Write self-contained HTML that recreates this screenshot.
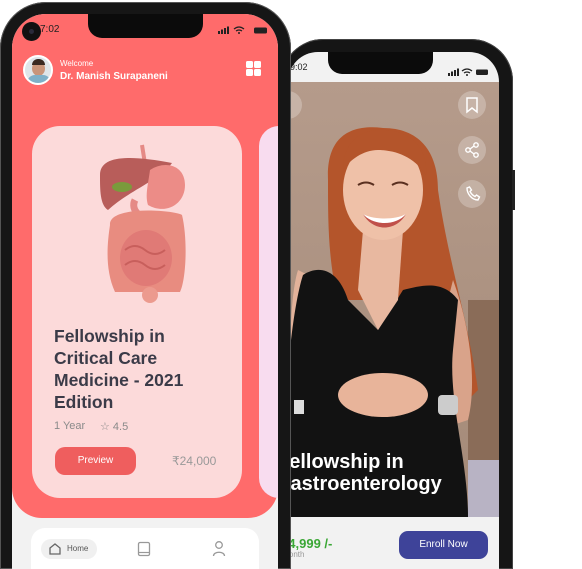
<!DOCTYPE html>
<html style="width:582px;height:569px;overflow:hidden"><head><meta charset="utf-8"><style>
*{margin:0;padding:0;box-sizing:border-box}
body{width:582px;height:569px;overflow:hidden;background:#fff;position:relative;font-family:"Liberation Sans",sans-serif}
.a{position:absolute}
</style></head><body>

<!-- back phone -->
<div class="a" style="left:281px;top:39px;width:232px;height:530px;border-radius:42px 42px 0 0;background:#151515;box-shadow:0 0 0 1px #444 inset"></div>
<div class="a" style="left:512px;top:170px;width:3px;height:40px;background:#222"></div>
<div class="a" style="left:288px;top:52px;width:211px;height:517px;border-radius:30px 30px 0 0;background:#f2f2f2;overflow:hidden">
  <svg class="a" style="left:0;top:30px" width="211" height="435" viewBox="290 82 211 435">
    <defs>
      <linearGradient id="bg" x1="0" y1="0" x2="0" y2="1"><stop offset="0" stop-color="#b59b8b"/><stop offset="1" stop-color="#a48a78"/></linearGradient>
    </defs>
    <rect x="290" y="82" width="211" height="435" fill="url(#bg)"/>
    <rect x="470" y="300" width="31" height="217" fill="#8a6c58"/>
    <rect x="470" y="460" width="31" height="57" fill="#b8b3c4"/>
    <path d="M330 180 C328 130 360 125 385 128 C420 128 440 150 440 190 C450 260 470 320 480 390 L470 400 C455 380 440 330 430 300 L340 300 C330 260 330 220 330 180Z" fill="#b4552b"/>
    <path d="M300 270 C290 300 290 400 298 420 L330 420 L320 280Z" fill="#e2b29a"/>
    <path d="M455 280 C470 320 480 380 470 420 L440 430 L450 300Z" fill="#d9a38a"/>
    <path d="M305 275 C320 265 340 268 350 300 L380 330 L405 290 C425 285 445 280 460 300 L455 350 C450 400 470 460 470 517 L292 517 L292 350 C295 320 300 290 305 275Z" fill="#121212"/>
    <path d="M365 230 L405 230 L400 300 L380 330 L360 290Z" fill="#e8b8a0"/>
    <ellipse cx="385" cy="190" rx="40" ry="50" fill="#efc1a8"/>
    <path d="M345 170 C345 140 365 128 388 130 C415 132 430 150 428 175 C415 155 395 150 380 150 C365 150 352 160 345 170Z" fill="#b4552b"/>
    <path d="M365 214 C375 228 398 228 408 214 C398 220 375 220 365 214Z" fill="#fff"/>
    <path d="M365 214 C375 232 398 232 408 214 C398 226 375 226 365 214Z" fill="#c0504a"/>
    <path d="M360 185 q8 -5 16 0 M394 185 q8 -5 16 0" stroke="#5a3020" stroke-width="2" fill="none"/>
    <ellipse cx="385" cy="395" rx="45" ry="22" fill="#e8b49a"/>
    <rect x="440" y="395" width="20" height="20" rx="4" fill="#ccc"/>
    <rect x="296" y="400" width="10" height="14" fill="#ddd"/>
    <text x="279" y="468" font-family="Liberation Sans" font-weight="bold" font-size="20" fill="#fff">Fellowship in</text>
    <text x="277" y="490" font-family="Liberation Sans" font-weight="bold" font-size="20" fill="#fff">Gastroenterology</text>
    <circle cx="474" cy="105" r="14" fill="rgba(255,255,255,0.25)"/>
    <circle cx="474" cy="150" r="14" fill="rgba(255,255,255,0.25)"/>
    <circle cx="474" cy="194" r="14" fill="rgba(255,255,255,0.25)"/>
    <circle cx="290" cy="105" r="14" fill="rgba(255,255,255,0.25)"/>
    <path d="M469 98 h10 v14 l-5 -4 l-5 4z" fill="none" stroke="#fff" stroke-width="1.5"/>
    <g stroke="#fff" stroke-width="1.4" fill="none"><circle cx="478" cy="145" r="2.2"/><circle cx="470" cy="150" r="2.2"/><circle cx="478" cy="155" r="2.2"/><path d="M472 149 L476 146 M472 151 L476 154"/></g>
    <path d="M469 188 c0 6 5 12 11 12 l1.5 -3 l-3 -2 l-1.5 1.5 c-2 -1 -4 -3 -5 -5 l1.5 -1.5 l-2 -3z" fill="none" stroke="#fff" stroke-width="1.4"/>
  </svg>
  <div class="a" style="left:2px;top:10px;font-size:9px;color:#222">9:02</div>
  <div class="a" style="left:40px;top:0;width:105px;height:22px;background:#0b0b0b;border-radius:0 0 14px 14px"></div>
  <div class="a" style="left:-8px;top:484px;font-size:13px;font-weight:bold;color:#3aa735">₹4,999 /-</div>
  <div class="a" style="left:-8px;top:498px;font-size:8px;color:#999">/Month</div>
  <div class="a" style="left:111px;top:479px;width:89px;height:28px;border-radius:9px;background:#3e4399;color:#fff;font-size:10px;line-height:28px;text-align:center">Enroll Now</div>
  <div class="a" style="left:160px;top:11px;width:42px;height:8px">
    <svg width="42" height="8"><rect x="0" y="5" width="2" height="3" fill="#222"/><rect x="3" y="3.5" width="2" height="4.5" fill="#222"/><rect x="6" y="2" width="2" height="6" fill="#222"/><rect x="9" y="0.5" width="2" height="7.5" fill="#222"/><path d="M14 3 q5 -4 10 0 M16 5 q3 -2 6 0" stroke="#222" stroke-width="1.3" fill="none"/><circle cx="19" cy="7" r="1" fill="#222"/><rect x="28" y="1.5" width="12" height="5.5" rx="1.2" fill="#222"/></svg>
  </div>
</div>

<!-- front phone -->
<div class="a" style="left:0;top:2px;width:291px;height:567px;border-radius:46px 46px 0 0;background:#161616;box-shadow:0 0 0 1px #555 inset"></div>
<div class="a" style="left:12px;top:14px;width:266px;height:555px;border-radius:34px 34px 0 0;background:#f2f2f2;overflow:hidden">
  <div class="a" style="left:0;top:0;width:266px;height:504px;background:#ff6b6b;border-radius:0 0 30px 30px"></div>
  <div class="a" style="left:76px;top:0;width:115px;height:24px;background:#0b0b0b;border-radius:0 0 14px 14px"></div>
  <div class="a" style="left:28px;top:10px;font-size:10px;color:#222">7:02</div>
  <svg class="a" style="left:206px;top:12px" width="52" height="9"><rect x="0" y="5" width="2" height="3" fill="#222"/><rect x="3" y="3.5" width="2" height="4.5" fill="#222"/><rect x="6" y="2" width="2" height="6" fill="#222"/><rect x="9" y="0.5" width="2" height="7.5" fill="#222"/><path d="M16 3 q5 -4 10 0 M18 5 q3 -2 6 0" stroke="#222" stroke-width="1.3" fill="none"/><circle cx="21" cy="7" r="1" fill="#222"/><rect x="36" y="1.5" width="13" height="6" rx="1.5" fill="#222"/></svg>
  <div class="a" style="left:11px;top:41px;width:30px;height:30px;border-radius:50%;background:#dfe6ea;border:2px solid #fff;overflow:hidden">
    <div class="a" style="left:7px;top:4px;width:13px;height:15px;border-radius:50%;background:#c9957a"></div>
    <div class="a" style="left:7px;top:2px;width:13px;height:6px;border-radius:6px 6px 0 0;background:#3a2a22"></div>
    <div class="a" style="left:2px;top:18px;width:24px;height:14px;border-radius:8px 8px 0 0;background:#7fb0c8"></div>
  </div>
  <div class="a" style="left:48px;top:45px;font-size:8px;color:#fff">Welcome</div>
  <div class="a" style="left:48px;top:57px;font-size:10px;font-weight:bold;color:#fff">Dr. Manish Surapaneni</div>
  <div class="a" style="left:234px;top:47px;width:15px;height:15px">
    <div class="a" style="left:0;top:0;width:6.5px;height:6.5px;background:#fff;border-radius:1.5px"></div>
    <div class="a" style="left:8px;top:0;width:6.5px;height:6.5px;background:#fff;border-radius:1.5px"></div>
    <div class="a" style="left:0;top:8px;width:6.5px;height:6.5px;background:#fff;border-radius:1.5px"></div>
    <div class="a" style="left:8px;top:8px;width:6.5px;height:6.5px;background:#fff;border-radius:1.5px"></div>
  </div>
  <div class="a" style="left:20px;top:112px;width:210px;height:372px;border-radius:28px;background:#fcdada"></div>
  <div class="a" style="left:247px;top:112px;width:40px;height:372px;border-radius:28px;background:#f8dcef"></div>
  <svg class="a" style="left:20px;top:112px" width="210" height="200" viewBox="32 126 210 200">
    <path d="M142 145 L146 170" stroke="#e58a86" stroke-width="4"/>
    <path d="M100 175 C100 155 130 155 172 163 C160 180 130 190 108 210 C100 205 100 190 100 175Z" fill="#b85d5a"/>
    <path d="M150 170 C165 160 185 165 185 185 C185 205 165 215 148 205 C145 195 148 185 150 170Z" fill="#ec8c87"/>
    <ellipse cx="122" cy="187" rx="10" ry="5" fill="#7a9b3c"/>
    <path d="M135 200 C130 210 140 220 160 222 C175 222 180 232 160 235" stroke="#e58a86" stroke-width="7" fill="none"/>
    <path d="M110 225 C108 205 175 210 182 215 C188 240 186 280 180 292 L115 292 C105 270 107 245 110 225Z" fill="#e88c80"/>
    <ellipse cx="146" cy="258" rx="26" ry="28" fill="#e07a76"/>
    <path d="M125 250 q10 -8 20 0 q10 8 20 0 M125 265 q10 -8 20 0 q10 8 20 0" stroke="#c85f5c" stroke-width="2" fill="none"/>
    <ellipse cx="150" cy="295" rx="8" ry="8" fill="#ec9a8e"/>
  </svg>
  <div class="a" style="left:42px;top:311px;font-size:17.5px;font-weight:bold;color:#3b3b48;line-height:22px">Fellowship in<br>Critical Care<br>Medicine - 2021<br>Edition</div>
  <div class="a" style="left:42px;top:406px;font-size:11px;color:#8a8a8a">1 Year</div>
  <div class="a" style="left:88px;top:406px;font-size:11px;color:#8a8a8a">☆ 4.5</div>
  <div class="a" style="left:43px;top:433px;width:81px;height:28px;border-radius:10px;background:#ef5e5e;color:#fff;font-size:10px;line-height:28px;text-align:center">Preview</div>
  <div class="a" style="left:160px;top:440px;font-size:12px;color:#999">₹24,000</div>
  <div class="a" style="left:19px;top:514px;width:228px;height:41px;border-radius:14px 14px 0 0;background:#fff"></div>
  <div class="a" style="left:29px;top:525px;width:56px;height:20px;border-radius:10px;background:#f0f0f0"></div>
  <svg class="a" style="left:36px;top:528px" width="14" height="14"><path d="M2 6 L7 2 L12 6 V12 H2Z" fill="none" stroke="#666" stroke-width="1.3"/></svg>
  <div class="a" style="left:55px;top:530px;font-size:8px;color:#555">Home</div>
  <svg class="a" style="left:125px;top:527px" width="14" height="16"><rect x="1.5" y="1.5" width="11" height="13" rx="1.5" fill="none" stroke="#999" stroke-width="1.3"/><path d="M1.5 11.5 H12.5" stroke="#999" stroke-width="1.2"/></svg>
  <svg class="a" style="left:200px;top:526px" width="14" height="17"><circle cx="7" cy="5" r="3.3" fill="none" stroke="#999" stroke-width="1.3"/><path d="M1.5 16 C1.5 11 12.5 11 12.5 16" fill="none" stroke="#999" stroke-width="1.3"/></svg>
</div>
<div class="a" style="left:22px;top:22px;width:19px;height:19px;border-radius:50%;background:#111"></div>
<div class="a" style="left:29px;top:29px;width:5px;height:5px;border-radius:50%;background:#2a2a3a"></div>
</body></html>
